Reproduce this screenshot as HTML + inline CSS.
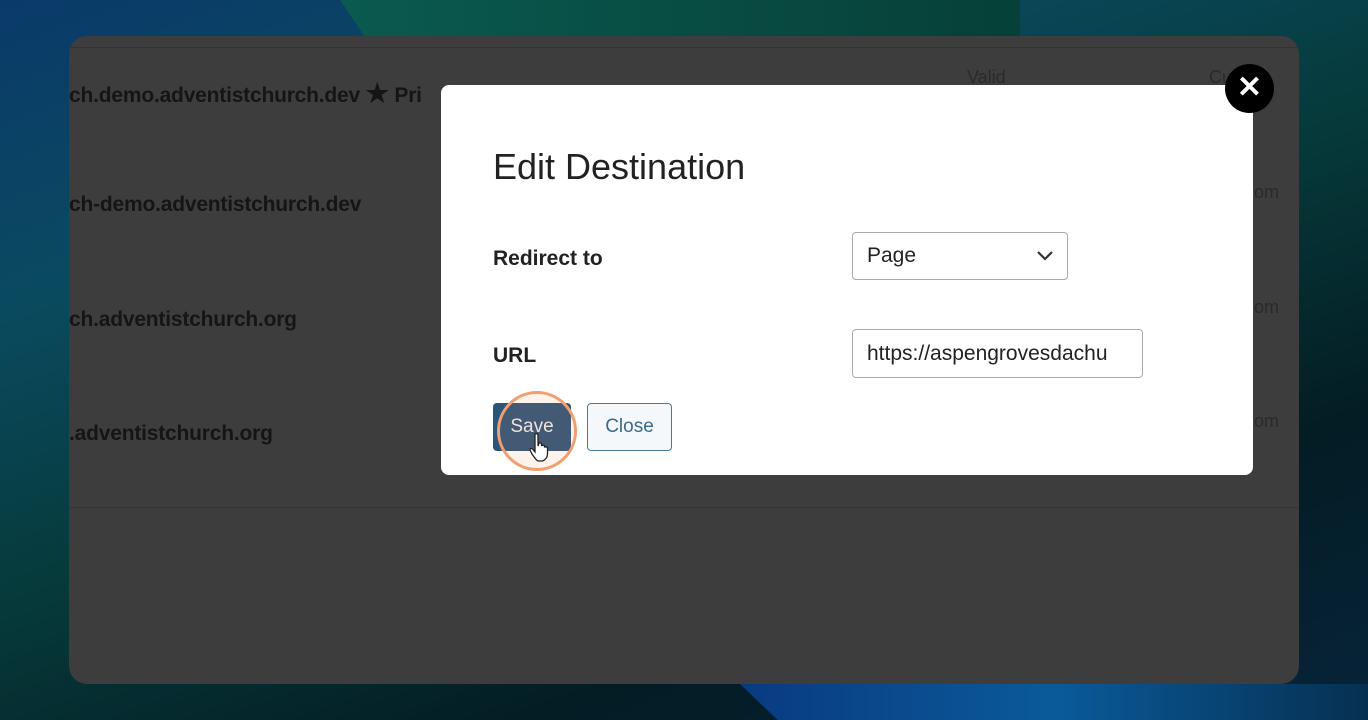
<!DOCTYPE html>
<html><head><style>
*{margin:0;padding:0;box-sizing:border-box}
body{width:1368px;height:720px;overflow:hidden;position:relative;font-family:"Liberation Sans",sans-serif;
background:linear-gradient(160deg,#0a3a6a 0%,#0a4a60 25%,#063a3a 50%,#041c24 75%,#06243a 100%)}
.bg1{position:absolute;left:340px;top:0;width:680px;height:40px;background:linear-gradient(90deg,#0a5a50,#064038);clip-path:polygon(0 0,100% 0,100% 100%,4% 100%)}
.bg2{position:absolute;left:740px;top:684px;width:628px;height:36px;background:linear-gradient(90deg,#0a3a80,#0a5a9a,#063050);clip-path:polygon(0 0,100% 0,100% 100%,6% 100%)}
.panel{position:absolute;left:69px;top:36px;width:1230px;height:648px;background:#3d3d3d;border-radius:18px;overflow:hidden}
.t{position:absolute;color:#151515;font-size:21px;font-weight:bold;letter-spacing:-0.2px}
.g{position:absolute;color:#2a2a2a;font-size:18px}
.line{position:absolute;left:0;right:0;height:1px;background:#333}
.modal{position:absolute;left:441px;top:85px;width:812px;height:390px;background:#fff;border-radius:8px}
.x{position:absolute;left:1225px;top:64px;width:49px;height:49px;border-radius:50%;background:#000;color:#fff;font-size:30px;font-weight:bold;text-align:center;line-height:48px}
h1{position:absolute;left:52px;top:61px;font-weight:normal;font-size:36px;color:#222}
.lab{position:absolute;left:52px;font-size:21px;font-weight:bold;color:#222}
.sel{position:absolute;left:411px;top:147px;width:216px;height:48px;border:1px solid #aaa;border-radius:4px;font-size:21px;color:#222;padding:11px 14px}
.inp{position:absolute;left:411px;top:244px;width:291px;height:49px;border:1px solid #aaa;border-radius:4px;font-size:21px;color:#222;padding:12px 14px;white-space:nowrap;overflow:hidden}
.save{position:absolute;left:52px;top:318px;width:78px;height:48px;background:#2c5378;border-radius:4px;color:#eee;font-size:19px;text-align:center;line-height:48px}
.close{position:absolute;left:146px;top:318px;width:85px;height:48px;border:1px solid #4a7898;border-radius:4px;color:#3a6a8a;font-size:19px;text-align:center;line-height:46px;background:#f4f8fa}
.ring{position:absolute;left:56px;top:306px;width:80px;height:80px;border-radius:50%;border:3px solid #f0a070;background:rgba(240,150,100,.12)}
</style></head><body>
<div class="bg1"></div><div class="bg2"></div>
<div class="panel">
<div class="line" style="top:11px"></div>
<div class="t" style="left:0;top:42px">ch.demo.adventistchurch.dev <span style="font-size:26px">★</span> Pri</div>
<div class="g" style="left:898px;top:31px">Valid</div>
<div class="g" style="left:1140px;top:31px">Cu</div>
<div class="t" style="left:0;top:157px">ch-demo.adventistchurch.dev</div>
<div class="g" style="left:1185px;top:146px">om</div>
<div class="t" style="left:0;top:272px">ch.adventistchurch.org</div>
<div class="g" style="left:1185px;top:261px">om</div>
<div class="t" style="left:0;top:386px">.adventistchurch.org</div>
<div class="g" style="left:1185px;top:375px">om</div>
<div class="line" style="top:471px;background:#333"></div>
</div>
<div class="modal">
<h1>Edit Destination</h1>
<div class="lab" style="top:162px">Redirect to</div>
<div class="sel">Page<svg style="position:absolute;right:14px;top:18px" width="16" height="10" viewBox="0 0 16 10"><path d="M1 1l7 7 7-7" fill="none" stroke="#333" stroke-width="2.2"/></svg></div>
<div class="lab" style="top:259px">URL</div>
<div class="inp">https://aspengrovesdachu</div>
<div class="save">Save</div>
<div class="close">Close</div>
<div class="ring"></div>
<svg style="position:absolute;left:88px;top:347px" width="24" height="32" viewBox="0 0 24 32"><path d="M6 2c1.5-1 3 0 3 1.5V14l1-3c1-.5 2.5 0 2.5 1v2c.5-1 2.5-1 3 0v1.5c.5-1 2.5-1 3 .5v6c0 3-2 6-5 7H9c-2-1-4-4-6-7l-2-4c0-1.5 1.5-2 2.5-1L6 20V3.5z" fill="#fff" stroke="#222" stroke-width="1.3"/></svg>
</div>
<div class="x">✕</div>
</body></html>
